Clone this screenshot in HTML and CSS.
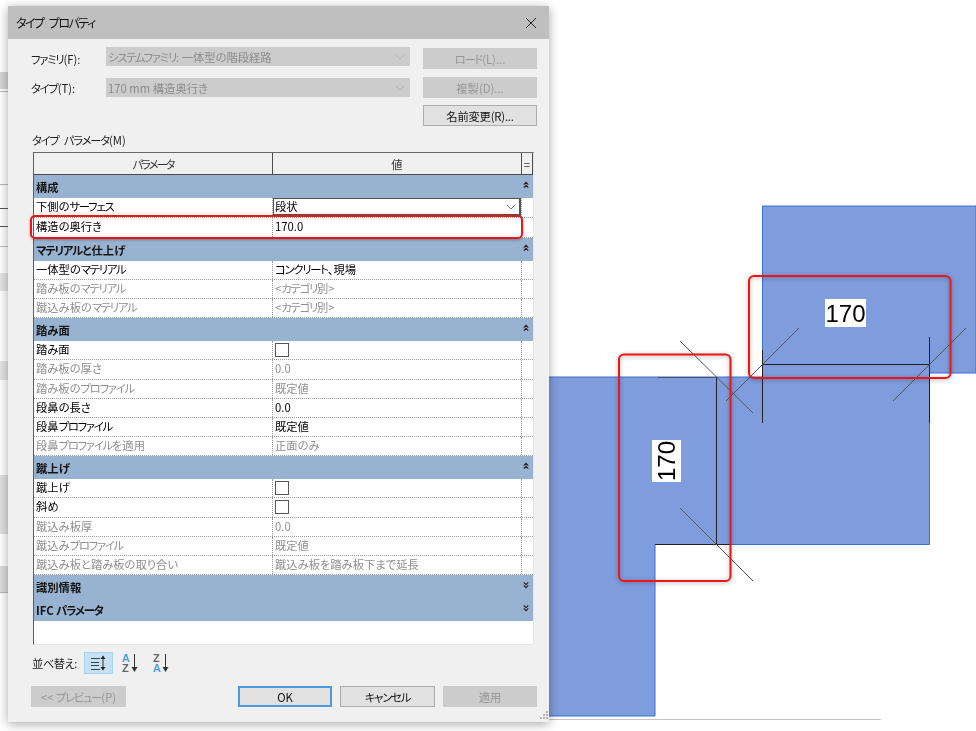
FILE: index.html
```html
<!DOCTYPE html>
<html lang="ja">
<head>
<meta charset="utf-8">
<title>タイプ プロパティ</title>
<link rel="stylesheet" href="styles.css">
</head>
<body>
<div class="stage">
  <svg class="canvas" width="976" height="731" viewBox="0 0 976 731" xmlns="http://www.w3.org/2000/svg">
    <g class="behind">
      <rect x="0" y="72" width="8" height="17" fill="#d4d4d4"/>
      <rect x="0" y="273" width="8" height="18" fill="#e4e4e4"/>
      <rect x="0" y="361" width="8" height="19" fill="#e4e4e4"/>
      <rect x="0" y="475" width="8" height="59" fill="#e0e0e0"/>
      <rect x="0" y="566" width="8" height="26" fill="#dcdcdc"/>
      <path d="M0 91.500H8M0 184.500H8M0 246.500H8M0 592.500H8" stroke="#bbb"/>
      <path d="M0 208.500H8M0 226.500H8" stroke="#555"/>
    </g>
    <path class="stairs" d="M762.500 206 H976 V373 H929.500 V544.500 H655 V716 H540 V377 H762.500 Z"/>
    <path d="M549 719.500H881" stroke="#c4c4c4"/>
    <g class="dim">
      <path d="M762.500 364.500H929.500M762.500 350V423M929.500 337V423M716.500 377V544.500M655 544.500H731"/>
      <path class="soft" d="M658 377.500H717"/>
    </g>
    <g class="tick">
      <path d="M726 401L799 328M893 401L966 328M680 341L753 413M680 508L753 581"/>
    </g>
    <rect x="825" y="299" width="41" height="28" fill="#fff"/>
    <text class="dim-label" x="845.500" y="322">170</text>
    <rect x="652" y="440" width="29" height="42" fill="#fff"/>
    <text class="dim-label" transform="translate(675 461) rotate(-90)" x="0" y="0">170</text>
    <rect class="red" x="749" y="276" width="201.500" height="102" rx="5"/>
    <rect class="red" x="619" y="354.500" width="111.500" height="226.500" rx="5"/>
  </svg>

  <section class="dialog">
    <header class="titlebar">
      <span class="title">タイプ プロパティ</span>
      <svg class="close" width="12" height="12" viewBox="0 0 12 12"><path d="M1 1L11 11M11 1L1 11" stroke="#222" fill="none"/></svg>
    </header>

    <div class="content">
      <div class="form">
        <label class="form-label"><span class="kana">ファミリ</span>(F):</label>
        <div class="combo combo-first"><span><span class="kana">システムファミリ</span>: 一体型の階段経路</span><svg class="chev" width="10" height="6" viewBox="0 0 10 6"><path d="M1 1L5 5L9 1" stroke="#b5b5b5" fill="none"/></svg></div>
        <button class="btn off btn-first"><span class="kana">ロード</span>(L)...</button>
        <label class="form-label"><span class="kana">タイプ</span>(T):</label>
        <div class="combo"><span>170 mm 構造奥行き</span><svg class="chev" width="10" height="6" viewBox="0 0 10 6"><path d="M1 1L5 5L9 1" stroke="#b5b5b5" fill="none"/></svg></div>
        <button class="btn off">複製(D)...</button>
        <button class="btn rename">名前変更(R)...</button>
      </div>

      <div class="table-label"><span class="kana">タイプ パラメータ</span>(M)</div>

      <div class="ptable">
        <div class="thead">
          <div class="th c1"><span class="kana-tight">パラメータ</span></div>
          <div class="th c2">値</div>
          <div class="th c3">=</div>
        </div>

        <div class="section"><span>構成</span><svg class="fold" width="6" height="8" viewBox="0 0 8 9"><path d="M1 4L4 1L7 4M1 8L4 5L7 8"/></svg></div>
        <div class="row tall"><div class="c1">下側の<span class="kana">サーフェス</span></div><div class="c2 has-select"><div class="cell-select"><span>段状</span><svg class="chev" width="10" height="6" viewBox="0 0 10 6"><path d="M1 1L5 5L9 1" stroke="#777" fill="none"/></svg></div></div><div class="c3"></div></div>
        <div class="row tall"><div class="c1">構造の奥行き</div><div class="c2">170.0</div><div class="c3"></div></div>

        <div class="section"><span><span class="kana">マテリアル</span>と仕上げ</span><svg class="fold" width="6" height="8" viewBox="0 0 8 9"><path d="M1 4L4 1L7 4M1 8L4 5L7 8"/></svg></div>
        <div class="row"><div class="c1">一体型の<span class="kana">マテリアル</span></div><div class="c2"><span class="kana">コンクリート</span>、現場</div><div class="c3"></div></div>
        <div class="row dimmed"><div class="c1">踏み板の<span class="kana">マテリアル</span></div><div class="c2">&lt;<span class="kana">カテゴリ</span>別&gt;</div><div class="c3"></div></div>
        <div class="row dimmed"><div class="c1">蹴込み板の<span class="kana">マテリアル</span></div><div class="c2">&lt;<span class="kana">カテゴリ</span>別&gt;</div><div class="c3"></div></div>

        <div class="section"><span>踏み面</span><svg class="fold" width="6" height="8" viewBox="0 0 8 9"><path d="M1 4L4 1L7 4M1 8L4 5L7 8"/></svg></div>
        <div class="row"><div class="c1">踏み面</div><div class="c2"><span class="check"></span></div><div class="c3"></div></div>
        <div class="row dimmed"><div class="c1">踏み板の厚さ</div><div class="c2">0.0</div><div class="c3"></div></div>
        <div class="row dimmed"><div class="c1">踏み板の<span class="kana">プロファイル</span></div><div class="c2">既定値</div><div class="c3"></div></div>
        <div class="row"><div class="c1">段鼻の長さ</div><div class="c2">0.0</div><div class="c3"></div></div>
        <div class="row"><div class="c1">段鼻<span class="kana">プロファイル</span></div><div class="c2">既定値</div><div class="c3"></div></div>
        <div class="row dimmed"><div class="c1">段鼻<span class="kana">プロファイル</span>を適用</div><div class="c2">正面のみ</div><div class="c3"></div></div>

        <div class="section"><span>蹴上げ</span><svg class="fold" width="6" height="8" viewBox="0 0 8 9"><path d="M1 4L4 1L7 4M1 8L4 5L7 8"/></svg></div>
        <div class="row"><div class="c1">蹴上げ</div><div class="c2"><span class="check"></span></div><div class="c3"></div></div>
        <div class="row"><div class="c1">斜め</div><div class="c2"><span class="check"></span></div><div class="c3"></div></div>
        <div class="row dimmed"><div class="c1">蹴込み板厚</div><div class="c2">0.0</div><div class="c3"></div></div>
        <div class="row dimmed"><div class="c1">蹴込み<span class="kana">プロファイル</span></div><div class="c2">既定値</div><div class="c3"></div></div>
        <div class="row dimmed"><div class="c1">蹴込み板と踏み板の取り合い</div><div class="c2">蹴込み板を踏み板下まで延長</div><div class="c3"></div></div>

        <div class="section"><span>識別情報</span><svg class="fold" width="6" height="8" viewBox="0 0 8 9"><path d="M1 1L4 4L7 1M1 5L4 8L7 5"/></svg></div>
        <div class="section"><span>IFC <span class="kana">パラメータ</span></span><svg class="fold" width="6" height="8" viewBox="0 0 8 9"><path d="M1 1L4 4L7 1M1 5L4 8L7 5"/></svg></div>

        <div class="highlight"></div>
      </div>

      <div class="sortbar">
        <span class="sort-label">並べ替え:</span>
        <span class="sort-btn active">
          <svg width="15" height="16" viewBox="0 0 15 16"><path d="M0 3.500H9M0 7.500H8M0 10.500H8M0 14.500H9" stroke="#444" fill="none"/><path d="M12 3V13" stroke="#333" fill="none"/><path d="M9.500 4L12 0.500L14.500 4ZM9.500 12L12 15.500L14.500 12Z" fill="#222"/></svg>
        </span>
        <span class="sort-btn">
          <svg width="17" height="20" viewBox="0 0 17 20"><text class="az"><tspan class="a" x="0" y="9">A</tspan><tspan class="z" x="0" y="19">Z</tspan></text><path d="M12.500 1V15" stroke="#333" fill="none"/><path d="M9.500 14H15.500L12.500 19Z" fill="#333"/></svg>
        </span>
        <span class="sort-btn">
          <svg width="17" height="20" viewBox="0 0 17 20"><text class="az"><tspan class="z" x="0" y="9">Z</tspan><tspan class="a" x="0" y="19">A</tspan></text><path d="M12.500 1V15" stroke="#333" fill="none"/><path d="M9.500 14H15.500L12.500 19Z" fill="#333"/></svg>
        </span>
      </div>

      <div class="actions">
        <button class="btn off preview">&lt;&lt; <span class="kana">プレビュー</span>(P)</button>
        <div class="actions-right">
          <button class="btn ok">OK</button>
          <button class="btn cancel"><span class="kana">キャンセル</span></button>
          <button class="btn off apply">適用</button>
        </div>
      </div>
    </div>

    <svg class="grip" width="12" height="12" viewBox="0 0 12 12"><path d="M9 1h2v2H9zM6 4h2v2H6zM9 4h2v2H9zM3 7h2v2H3zM6 7h2v2H6zM9 7h2v2H9z" fill="#b4b4b4"/></svg>
  </section>
</div>
</body>
</html>
```

FILE: styles.css
```css
* { box-sizing: border-box; }

html, body {
  margin: 0;
  padding: 0;
  background: #fff;
}

.stage {
  position: relative;
  width: 976px;
  height: 731px;
  overflow: hidden;
  background: #fff;
  filter: blur(0.35px);
  font-family: "Noto Sans CJK JP", "Noto Sans", sans-serif;
  font-size: 11.300px;
  font-feature-settings: "palt";
  color: #111;
}

.kana {
  letter-spacing: -1.200px;
  word-spacing: 4px;
}

.kana-tight {
  letter-spacing: -2px;
}

.canvas {
  position: absolute;
  left: 0;
  top: 0;
}

.stairs {
  fill: #7f9cdd;
  stroke: #3a6fd2;
  stroke-width: 1;
}

.dim path {
  stroke: #222;
  fill: none;
}

.dim path.soft {
  stroke: #4a5470;
}

.tick path {
  stroke: #555;
  fill: none;
}

.dim-label {
  font-family: "Liberation Sans", Arial, sans-serif;
  font-size: 24px;
  fill: #000;
  text-anchor: middle;
  font-feature-settings: normal;
}

.red {
  fill: none;
  stroke: #f01414;
  stroke-width: 2;
  filter: drop-shadow(0 1px 2px rgba(0, 0, 0, 0.35));
}

/* Dialog window */
.dialog {
  position: absolute;
  left: 8px;
  top: 6px;
  width: 541px;
  height: 716px;
  background: #f0f0f0;
  box-shadow: 0 2px 10px rgba(0, 0, 0, 0.35);
  display: flex;
  flex-direction: column;
}

.titlebar {
  height: 33px;
  flex: none;
  background: #bfbfbf;
  display: flex;
  align-items: center;
  justify-content: space-between;
  padding: 0 12px 0 8px;
  font-size: 12px;
  color: #111;
}

.title {
  letter-spacing: -1.500px;
  word-spacing: 4px;
}

.content {
  flex: 1;
  padding: 8px 12px 0 23px;
  display: flex;
  flex-direction: column;
}

.form {
  display: grid;
  grid-template-columns: 75px 304px 127px;
  grid-template-rows: 23px 21px 21px;
  row-gap: 7px;
}

.form-label {
  align-self: center;
  color: #222;
}

.combo {
  height: 19px;
  align-self: center;
  background: #ccc;
  color: #8c8c8c;
  display: flex;
  align-items: center;
  justify-content: space-between;
  padding: 0 5px 0 2px;
}

.combo-first {
  align-self: start;
}

.btn {
  font: inherit;
  font-feature-settings: inherit;
  padding: 0;
  margin: 0;
  height: 21px;
  width: 114px;
  background: #e1e1e1;
  border: 1px solid #adadad;
  color: #111;
}

.form .btn {
  justify-self: end;
}

.btn-first {
  margin-top: 1px;
}

.btn.off {
  background: #ccc;
  border-color: #ccc;
  color: #969696;
}

.rename {
  grid-column: 3;
  letter-spacing: -0.200px;
}

.table-label {
  margin: 6px 0 4px 1px;
  height: 16px;
  line-height: 16px;
  color: #222;
}

/* Parameter table */
.ptable {
  position: relative;
  width: 501px;
  height: 493px;
  margin-left: 2px;
  background: #fff;
  border-left: 1px solid #5c5c5c;
  border-top: 1px solid #6a6a6a;
  border-right: 1px solid #e6e6e6;
  border-bottom: 1px solid #e6e6e6;
}

.thead {
  height: 22.400px;
  display: flex;
  background: #f0f0f0;
  border-bottom: 1px solid #4c4c4c;
  color: #333;
}

.c1 { width: 239px; flex: none; }
.c2 { width: 249px; flex: none; }
.c3 { flex: 1; }

.th {
  display: flex;
  align-items: center;
  justify-content: center;
  border-right: 1px solid #4c4c4c;
}

.section {
  height: 23px;
  background: #98b3d1;
  display: flex;
  align-items: center;
  justify-content: space-between;
  padding: 1px 3px 0 2px;
  font-weight: 700;
  color: #141414;
}

.fold {
  align-self: flex-start;
  margin: 5px 1px 0;
}

.fold path {
  fill: none;
  stroke: #222;
  stroke-width: 1.500;
}

.row {
  height: 19.200px;
  display: flex;
  border-bottom: 1px dotted #9a9a9a;
  line-height: 17px;
  color: #000;
}

.row.tall {
  height: 19.600px;
}

.row.dimmed {
  color: #8f8f8f;
}

.row > .c1,
.row > .c2 {
  border-right: 1px dotted #9a9a9a;
  padding-left: 2px;
  white-space: nowrap;
}

.has-select.c2 {
  padding: 0;
}

.cell-select {
  height: 18px;
  border: 1px solid #555;
  border-width: 1px 2px 2px 1px;
  padding: 0 3px 0 1px;
  display: flex;
  align-items: center;
  justify-content: space-between;
  background: #fff;
}

.check {
  display: block;
  width: 14px;
  height: 14px;
  margin-top: 2px;
  border: 1px solid #555;
  background: #fff;
}

.highlight {
  position: absolute;
  left: -4px;
  top: 62px;
  width: 493px;
  height: 24px;
  border: 2px solid #f01414;
  border-radius: 5px;
  box-shadow: 0 1px 3px rgba(0, 0, 0, 0.3);
}

/* Sort toolbar */
.sortbar {
  display: flex;
  align-items: center;
  height: 22px;
  margin: 7px 0 0 1px;
}

.sort-label {
  width: 52px;
  color: #222;
  letter-spacing: -0.500px;
}

.sort-btn {
  width: 29px;
  height: 22px;
  display: flex;
  align-items: center;
  justify-content: center;
  margin-right: 2.500px;
}

.sort-btn.active {
  background: #c6e0f6;
  border: 1px solid #a9d2f2;
}

.az {
  font-family: "Liberation Sans", Arial, sans-serif;
  font-size: 11px;
  font-weight: 700;
}

.a { fill: #4f9de6; }
.z { fill: #666; }

/* Bottom buttons */
.actions {
  display: flex;
  justify-content: space-between;
  margin-top: 12px;
}

.actions-right {
  display: flex;
  gap: 8px;
}

.preview { width: 95px; }
.ok, .apply { width: 94px; }
.cancel { width: 95px; }

.ok {
  border: 2px solid #4a9be0;
}

.grip {
  position: absolute;
  right: 0;
  bottom: 0;
}
```
